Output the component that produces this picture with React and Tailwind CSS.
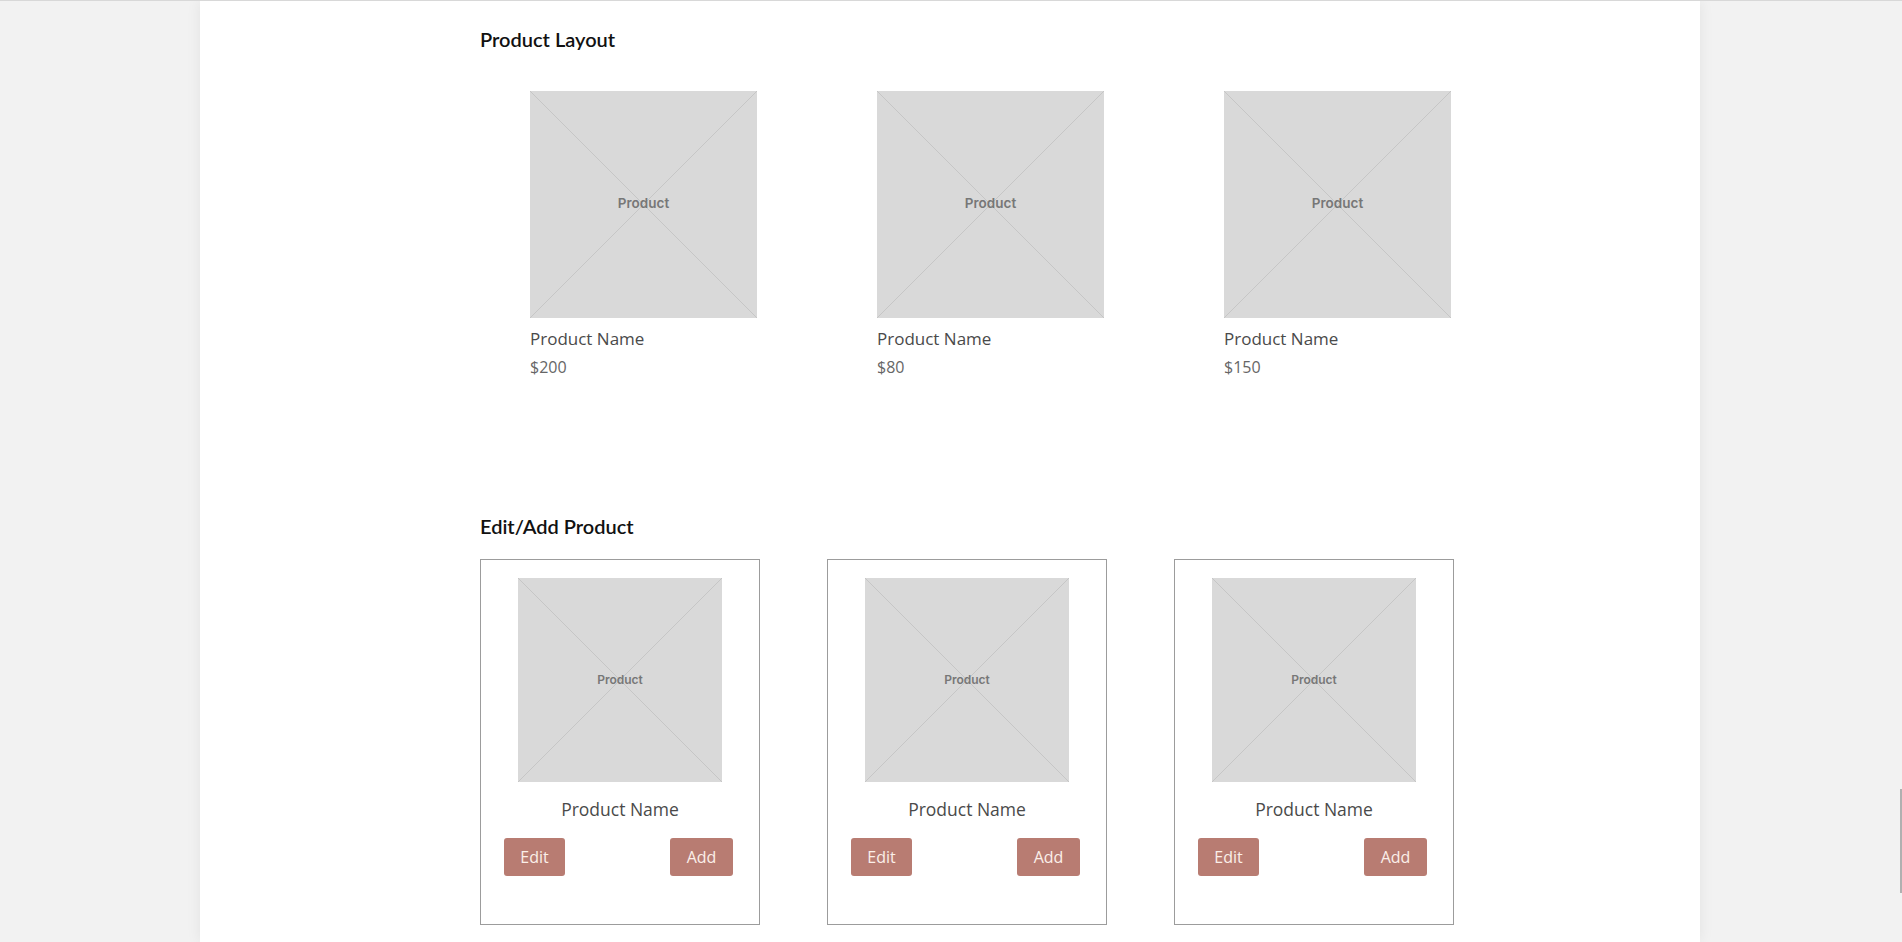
import React from "react";

function Placeholder({ size, textClass }) {
  return (
    <div
      className="relative bg-[#d9d9d9] flex items-center justify-center"
      style={{ width: size, height: size }}
    >
      <svg
        className="absolute inset-0 w-full h-full"
        viewBox="0 0 100 100"
        preserveAspectRatio="none"
      >
        <line x1="0" y1="0" x2="100" y2="100" stroke="#c6c6c6" strokeWidth="1" vectorEffect="non-scaling-stroke" />
        <line x1="100" y1="0" x2="0" y2="100" stroke="#c6c6c6" strokeWidth="1" vectorEffect="non-scaling-stroke" />
      </svg>
      <span className={"relative font-['Inter',sans-serif] font-semibold text-[#777777] " + textClass}>
        Product
      </span>
    </div>
  );
}

function ProductItem({ price }) {
  return (
    <div className="w-[227px] flex flex-col">
      <Placeholder size={227} textClass="text-[13.5px] -mt-[3px]" />
      <div className="mt-[9px] text-[17px] leading-[24px] text-[#4a4a4a]">Product Name</div>
      <div className="mt-[5px] text-[16px] leading-[22px] text-[#666666]">{price}</div>
    </div>
  );
}

function EditCard() {
  return (
    <div className="w-[280px] h-[366px] border border-[#9c9c9c] flex flex-col items-center pt-[18px]">
      <Placeholder size={204} textClass="text-[12px]" />
      <div className="mt-[15px] text-[17.5px] leading-[24px] text-[#4a4a4a]">Product Name</div>
      <div className="mt-[17px] w-full flex justify-between pl-[23px] pr-[26px]">
        <button className="h-[38px] w-[61px] rounded-[3px] bg-[#b87c72] text-[#fbefe9] text-[16px]">
          Edit
        </button>
        <button className="h-[38px] w-[63px] rounded-[3px] bg-[#b87c72] text-[#fbefe9] text-[16px]">
          Add
        </button>
      </div>
    </div>
  );
}

export default function App() {
  return (
    <div className="relative h-[942px] overflow-hidden bg-[#f2f2f2] border-t border-[#d8d8d8] font-['Open_Sans',sans-serif]">
      <div className="ml-[200px] w-[1500px] h-full bg-white shadow-[0_0_14px_rgba(0,0,0,0.07)] pl-[280px] pt-[26px]">
        <h2 className="font-['Lato',sans-serif] font-semibold text-[20px] leading-[24px] text-[#111111]">
          Product Layout
        </h2>
        <div className="mt-[40px] ml-[50px] flex gap-[120px]">
          <ProductItem price="$200" />
          <ProductItem price="$80" />
          <ProductItem price="$150" />
        </div>
        <h2 className="mt-[136px] font-['Lato',sans-serif] font-semibold text-[20px] leading-[24px] text-[#111111]">
          Edit/Add Product
        </h2>
        <div className="mt-[21px] flex gap-[67px]">
          <EditCard />
          <EditCard />
          <EditCard />
        </div>
      </div>
      <div className="absolute right-0 top-[788px] h-[104px] w-[2px] bg-[#b0b0b0]" />
    </div>
  );
}
